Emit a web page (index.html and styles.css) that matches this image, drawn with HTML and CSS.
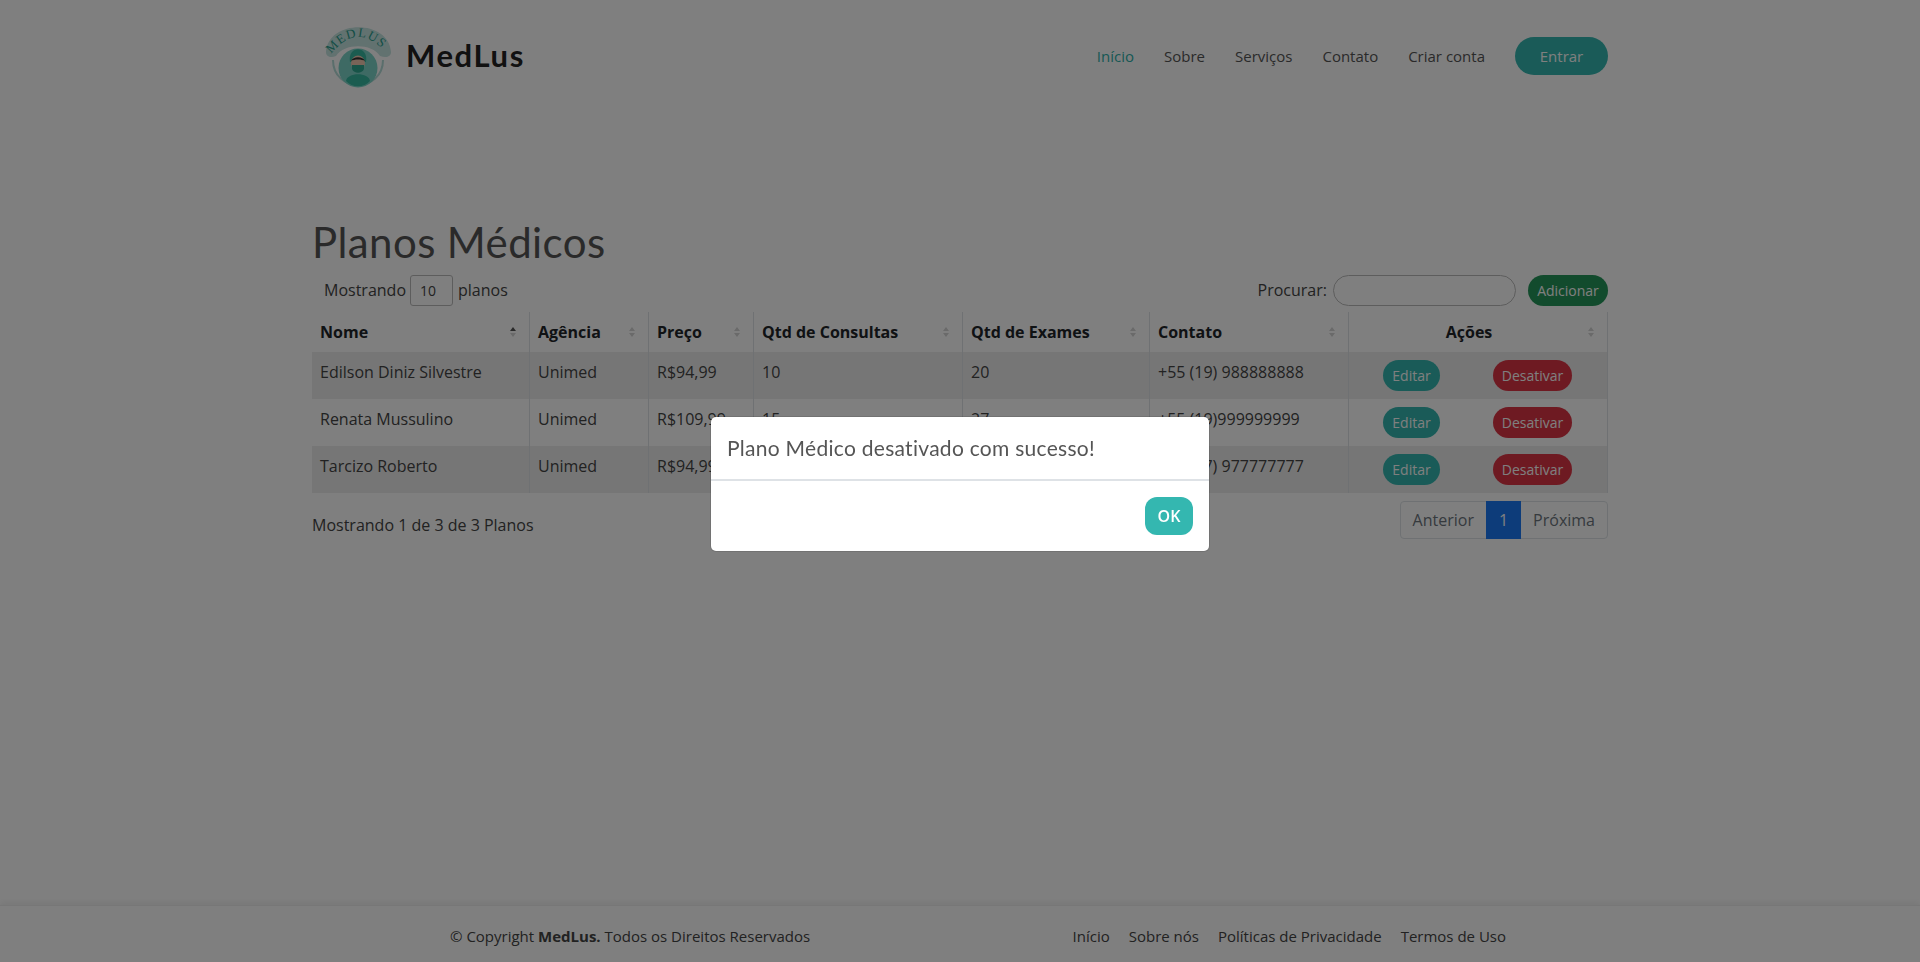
FILE: index.html
```html
<!DOCTYPE html>
<html lang="pt-BR">
<head>
  <meta charset="UTF-8">
  <title>MedLus - Planos Médicos</title>
  <link rel="stylesheet" href="styles.css">
</head>
<body>
  <header class="topbar">
    <div class="brand">
      <svg class="brand_logo" viewBox="0 0 65 60" width="65" height="60">
        <defs><path id="logo_arc" d="M5 27 Q32 -7 61 27"></path></defs>
        <path class="logo_banner" d="M0 25 C2 -8 63 -8 65 25 C65 30 60 31 54 29 C46 16 18 16 10 29 C5 31 0 30 0 25 Z"></path>
        <path class="logo_ring" d="M7 33 C7 66 57 66 57 33"></path>
        <circle class="logo_disc" cx="32" cy="41" r="19.5"></circle>
        <path class="logo_body" d="M20 54 C21 45 43 45 44 54 C38 61 26 61 20 54 Z"></path>
        <path class="logo_cap" d="M24 35 C21 18 43 18 40 35 Z"></path>
        <ellipse class="logo_face" cx="32" cy="36" rx="7" ry="7.5"></ellipse>
        <path class="logo_hair" d="M25 34 C27 29 37 29 39 34 C36 32 28 32 25 34 Z"></path>
        <path class="logo_mask" d="M26 38 H38 V42 C36 47 28 47 26 42 Z"></path>
        <text class="logo_text"><textPath href="#logo_arc">MEDLUS</textPath></text>
      </svg>
      <span class="brand_name">MedLus</span>
    </div>
    <nav class="topnav">
      <a class="topnav_link is_active">Início</a>
      <a class="topnav_link">Sobre</a>
      <a class="topnav_link">Serviços</a>
      <a class="topnav_link">Contato</a>
      <a class="topnav_link">Criar conta</a>
      <a class="btn_enter">Entrar</a>
    </nav>
  </header>

  <main class="content">
    <h1 class="page_title">Planos Médicos</h1>
    <div class="tools">
      <div class="tools_len">
        <span class="tools_label">Mostrando</span>
        <span class="len_box">10</span>
        <span class="tools_label">planos</span>
      </div>
      <div class="tools_search">
        <span class="tools_label">Procurar:</span>
        <span class="search_box"></span>
        <a class="btn_add">Adicionar</a>
      </div>
    </div>

    <table class="plans">
      <colgroup>
        <col class="c_nome"><col class="c_agencia"><col class="c_preco"><col class="c_cons"><col class="c_exam"><col class="c_cont"><col class="c_acoes">
      </colgroup>
      <thead>
        <tr>
          <th class="sorted">Nome</th>
          <th>Agência</th>
          <th>Preço</th>
          <th>Qtd de Consultas</th>
          <th>Qtd de Exames</th>
          <th>Contato</th>
          <th class="th_center">Ações</th>
        </tr>
      </thead>
      <tbody>
        <tr>
          <td>Edilson Diniz Silvestre</td><td>Unimed</td><td>R$94,99</td><td>10</td><td>20</td><td>+55 (19) 988888888</td>
          <td class="td_actions"><div class="actions"><a class="btn_edit">Editar</a><a class="btn_off">Desativar</a></div></td>
        </tr>
        <tr>
          <td>Renata Mussulino</td><td>Unimed</td><td>R$109,99</td><td>15</td><td>27</td><td>+55 (19)999999999</td>
          <td class="td_actions"><div class="actions"><a class="btn_edit">Editar</a><a class="btn_off">Desativar</a></div></td>
        </tr>
        <tr>
          <td>Tarcizo Roberto</td><td>Unimed</td><td>R$94,99</td><td>12</td><td>25</td><td>+55 (17) 977777777</td>
          <td class="td_actions"><div class="actions"><a class="btn_edit">Editar</a><a class="btn_off">Desativar</a></div></td>
        </tr>
      </tbody>
    </table>

    <div class="table_foot">
      <div class="table_info">Mostrando 1 de 3 de 3 Planos</div>
      <div class="pager">
        <a class="pager_item">Anterior</a>
        <a class="pager_item is_current">1</a>
        <a class="pager_item">Próxima</a>
      </div>
    </div>
  </main>

  <footer class="foot">
    <div class="foot_copy">© Copyright <strong>MedLus.</strong> Todos os Direitos Reservados</div>
    <div class="foot_links">
      <a>Início</a>
      <a>Sobre nós</a>
      <a>Políticas de Privacidade</a>
      <a>Termos de Uso</a>
    </div>
  </footer>

  <div class="backdrop">
    <div class="dialog">
      <div class="dialog_head">Plano Médico desativado com sucesso!</div>
      <div class="dialog_foot"><a class="btn_ok">OK</a></div>
    </div>
  </div>
</body>
</html>
```

FILE: styles.css
```css
* {
  box-sizing: border-box;
}

html, body {
  height: 100%;
  margin: 0;
}

body {
  display: flex;
  flex-direction: column;
  height: 962px;
  overflow: hidden;
  background: #fff;
  color: #444;
  font-family: "Open Sans", sans-serif;
  font-size: 16px;
}

/* top bar */
.topbar {
  display: flex;
  align-items: center;
  justify-content: space-between;
  width: 1296px;
  height: 112px;
  margin: 0 auto;
  flex: none;
}

.brand {
  display: flex;
  align-items: center;
  padding-left: 14px;
}

.brand_logo {
  margin-top: 2px;
  overflow: visible;
}

.brand_name {
  margin-left: 15px;
  margin-bottom: 2px;
  color: #222;
  font-family: "Lato", sans-serif;
  font-size: 31px;
  font-weight: 700;
  letter-spacing: 1.6px;
}

.logo_banner { fill: #c4e4e0; }
.logo_ring { fill: none; stroke: #b4dcd8; stroke-width: 2; }
.logo_disc { fill: #7cd4c8; }
.logo_body { fill: #36b8a0; }
.logo_cap { fill: #36b8a0; }
.logo_mask { fill: #2ea890; }
.logo_face { fill: #f0c8b0; }
.logo_hair { fill: #333; }
.logo_text {
  fill: #2a9c8c;
  font-family: "Liberation Serif", serif;
  font-size: 13px;
  letter-spacing: 1.2px;
}

.topnav {
  display: flex;
  align-items: center;
  font-size: 15px;
}

.topnav_link {
  margin-right: 30px;
  color: #555;
}

.topnav_link.is_active {
  color: #2eb1aa;
}

.btn_enter {
  display: flex;
  align-items: center;
  justify-content: center;
  width: 93px;
  height: 38px;
  border-radius: 19px;
  background: #34b7b0;
  color: #fff;
}

/* main content */
.content {
  flex: 1;
  width: 1296px;
  margin: 0 auto;
  padding-top: 97px;
}

.page_title {
  margin: 0;
  color: #555;
  font-family: "Lato", sans-serif;
  font-size: 42px;
  font-weight: 400;
  letter-spacing: 0.4px;
  line-height: 66px;
}

.tools {
  display: flex;
  align-items: center;
  justify-content: space-between;
  height: 31px;
}

.tools_label {
  margin-bottom: 2px;
}

.tools_len {
  display: flex;
  align-items: center;
  padding-left: 12px;
}

.len_box {
  display: flex;
  align-items: center;
  width: 43px;
  height: 31px;
  margin: 0 5px 0 4px;
  padding-left: 9px;
  border: 1px solid #bbb;
  border-radius: 3px;
  font-size: 14px;
}

.tools_search {
  display: flex;
  align-items: center;
}

.search_box {
  width: 183px;
  height: 31px;
  margin: 0 12px 0 6px;
  border: 1px solid #bbb;
  border-radius: 16px;
}

.btn_add {
  display: flex;
  align-items: center;
  justify-content: center;
  width: 80px;
  height: 31px;
  border-radius: 16px;
  background: #25965a;
  color: #fff;
  font-size: 14px;
}

/* table */
.plans {
  width: 100%;
  margin-top: 6px;
  border-collapse: collapse;
  table-layout: fixed;
  color: #444;
}

.c_nome { width: 217.5px; }
.c_agencia { width: 119px; }
.c_preco { width: 105px; }
.c_cons { width: 209px; }
.c_exam { width: 187px; }
.c_cont { width: 199px; }

.plans th {
  position: relative;
  height: 40px;
  padding: 0 8px;
  border-left: 1px solid #dee2e6;
  color: #212529;
  font-weight: 700;
  text-align: left;
}

.plans th:first-child,
.plans td:first-child {
  border-left: 0;
}

.plans th:last-child,
.plans td:last-child {
  border-right: 1px solid #dee2e6;
}

/* sort arrows, same as a datatables header */
.plans th::before,
.plans th::after {
  content: "";
  position: absolute;
  right: 13px;
  border-left: 3px solid transparent;
  border-right: 3px solid transparent;
}

.plans th::before {
  top: 15px;
  border-bottom: 4px solid #d4d4d4;
}

.plans th::after {
  top: 21px;
  border-top: 4px solid #d4d4d4;
}

.plans th.sorted::before {
  border-bottom-color: #555;
}

.plans th.th_center {
  padding-right: 26px;
  text-align: center;
}

.plans td {
  height: 47px;
  padding: 8px;
  border-left: 1px solid #dee2e6;
  vertical-align: top;
  line-height: 24px;
}

.plans tbody tr:nth-child(odd) {
  background: #ededed;
}

.actions {
  display: flex;
  justify-content: space-between;
  padding: 0 35px 0 34px;
}

.plans .td_actions {
  padding: 8px 0;
}

.btn_edit,
.btn_off {
  display: flex;
  align-items: center;
  justify-content: center;
  height: 31px;
  border-radius: 16px;
  color: #fff;
  font-size: 14px;
}

.btn_edit {
  width: 57px;
  background: #34b7b0;
}

.btn_off {
  width: 79px;
  background: #dc3545;
}

.table_foot {
  display: flex;
  justify-content: space-between;
  margin-top: 8px;
}

.table_info {
  padding-top: 13px;
}

.pager {
  display: flex;
  height: 38px;
  border: 1px solid #dee2e6;
  border-radius: 4px;
}

.pager_item {
  display: flex;
  align-items: center;
  padding: 0 12px;
  color: #6c757d;
}

.pager_item.is_current {
  margin: -1px 0;
  padding: 0 13px;
  background: #1a78f5;
  color: #fff;
}

/* footer */
.foot {
  display: flex;
  align-items: center;
  justify-content: space-between;
  flex: none;
  height: 57px;
  padding: 4px 414px 0 450px;
  border-top: 1px solid #eee;
  box-shadow: 0 -3px 6px rgba(0, 0, 0, 0.06);
  font-size: 15px;
}

.foot_links {
  display: flex;
  gap: 19px;
}

/* modal */
.backdrop {
  position: fixed;
  inset: 0;
  background: rgba(0, 0, 0, 0.5);
}

.dialog {
  position: absolute;
  top: 417px;
  left: 711px;
  width: 498px;
  height: 134px;
  overflow: hidden;
  border-radius: 5px;
  background: #fff;
  box-shadow: 0 0 0 1px rgba(0, 0, 0, 0.1);
}

.dialog_head {
  display: flex;
  align-items: center;
  height: 64px;
  padding: 0 16px 2px;
  border-bottom: 2px solid #dee2e6;
  color: #555;
  font-family: "Lato", sans-serif;
  font-size: 21px;
  letter-spacing: 0.28px;
}

.dialog_foot {
  display: flex;
  justify-content: flex-end;
  padding: 16px 16px 0;
}

.btn_ok {
  display: flex;
  align-items: center;
  justify-content: center;
  width: 48px;
  height: 38px;
  border-radius: 12px;
  background: #34b7b0;
  color: #fff;
  font-weight: 600;
}
```
